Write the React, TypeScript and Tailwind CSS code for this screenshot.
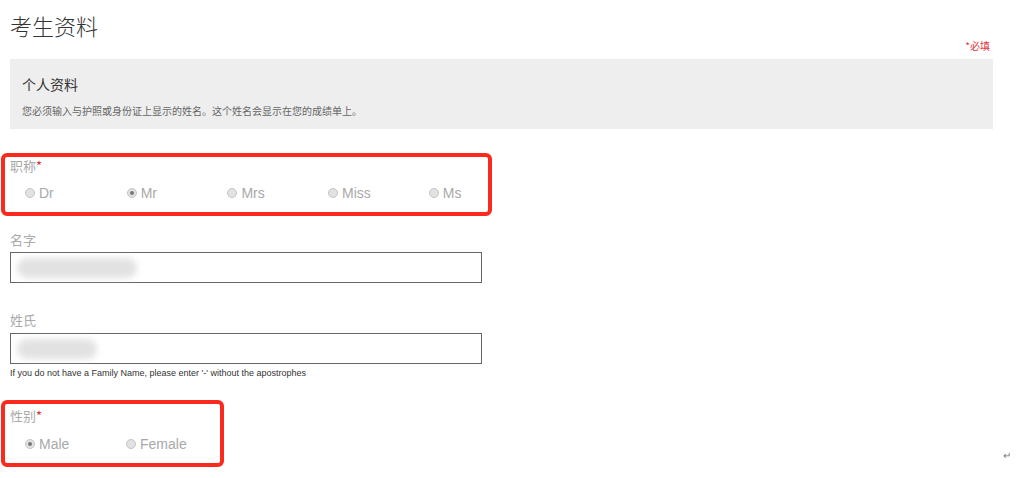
import React from "react";

const CN = "font-['Noto_Sans_CJK_SC','Microsoft_YaHei',sans-serif]";
const EN = "font-['Liberation_Sans',Arial,sans-serif]";

function Radio({ label, checked, width }: { label: string; checked?: boolean; width: string }) {
  return (
    <div className={`flex items-center gap-[4px] ${width}`}>
      <span className="flex h-[10px] w-[10px] items-center justify-center rounded-full border border-[#c4c4c4] bg-[#e2e2e2]">
        {checked && <span className="h-[4px] w-[4px] rounded-full bg-[#777]" />}
      </span>
      <span className={`${EN} text-[14px] leading-[18px] text-[#a9a9a9]`}>{label}</span>
    </div>
  );
}

function Blur({ w }: { w: string }) {
  return (
    <div className="flex h-full items-center pl-[6px]">
      <div className={`h-[20px] ${w} rounded-full bg-[#e2e2e2] blur-[3px]`} />
    </div>
  );
}

export default function App() {
  return (
    <div className={`${CN} h-[478px] w-[1019px] overflow-hidden bg-white`}>
      <h1 className="pl-[10px] pt-[11px] text-[22px] leading-[28px] font-light text-[#333]">考生资料</h1>
      <div className="w-[993px] pr-[3px] text-right text-[10px] leading-[14px] text-[#e0363b]">
        <span>*必填</span>
      </div>

      <div className="ml-[10px] mt-[6px] h-[70px] w-[983px] bg-[#eeeeee] px-[12px] pt-[15px]">
        <div className="text-[14px] leading-[20px] text-[#333]">个人资料</div>
        <div className="mt-[10px] text-[10px] leading-[14px] text-[#666]">
          您必须输入与护照或身份证上显示的姓名。这个姓名会显示在您的成绩单上。
        </div>
      </div>

      <div className="ml-[1px] mt-[24px] h-[63px] w-[491px] rounded-[6px] border-4 border-[#fb2a1e]">
        <div className="pl-[5px] text-[13px] leading-[18px] text-[#aaa]">
          职称<span className="text-[#d33]">*</span>
        </div>
        <div className="mt-[9px] flex pl-[20px]">
          <Radio label="Dr" width="w-[103px]" />
          <Radio label="Mr" checked width="w-[102px]" />
          <Radio label="Mrs" width="w-[102px]" />
          <Radio label="Miss" width="w-[102px]" />
          <Radio label="Ms" width="w-[60px]" />
        </div>
      </div>

      <div className="pl-[10px]">
        <div className="mt-[15px] text-[13px] leading-[18px] text-[#aaa]">名字</div>
        <div className="mt-[3px] h-[31px] w-[472px] border border-[#666]">
          <Blur w="w-[120px]" />
        </div>

        <div className="mt-[28px] text-[13px] leading-[18px] text-[#aaa]">姓氏</div>
        <div className="mt-[4px] h-[31px] w-[472px] border border-[#666]">
          <Blur w="w-[80px]" />
        </div>
        <div className={`${EN} mt-[3px] text-[9px] leading-[12px] text-[#333]`}>
          If you do not have a Family Name, please enter '-' without the apostrophes
        </div>
      </div>

      <div className="mt-[21px] flex w-[1019px] items-end justify-between">
        <div className="ml-[1px] h-[67px] w-[223px] rounded-[6px] border-4 border-[#fb2a1e]">
          <div className="pl-[5px] pt-[3px] text-[13px] leading-[18px] text-[#aaa]">
            性别<span className="text-[#d33]">*</span>
          </div>
          <div className="mt-[10px] flex pl-[20px]">
            <Radio label="Male" checked width="w-[101px]" />
            <Radio label="Female" width="w-[70px]" />
          </div>
        </div>
        <span className="mb-[6px] mr-[8px] text-[10px] leading-[12px] text-[#777]">↵</span>
      </div>
    </div>
  );
}
